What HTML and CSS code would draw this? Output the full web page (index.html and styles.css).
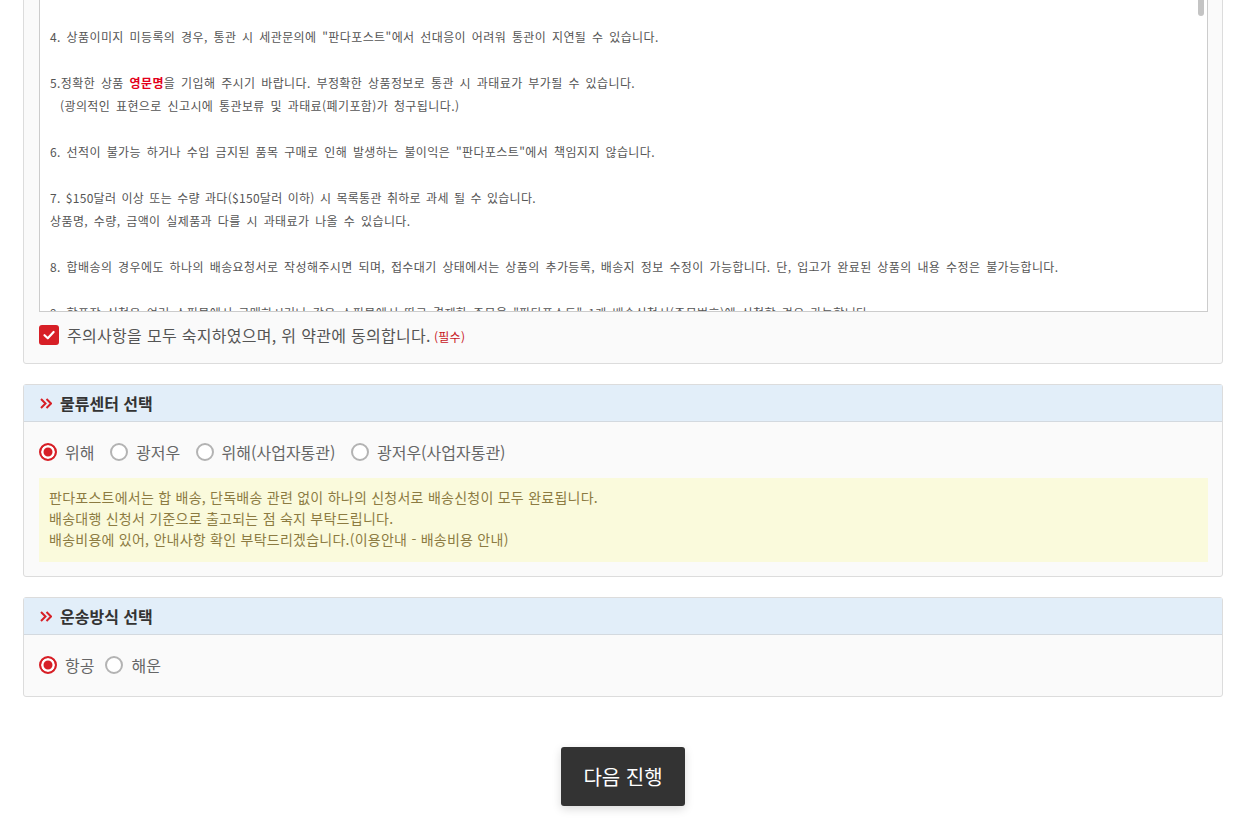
FILE: index.html
```html
<!DOCTYPE html>
<html lang="ko">
<head>
    <meta charset="UTF-8">
    <meta name="viewport" content="width=device-width, initial-scale=1.0">
    <title>배송대행 신청</title>
    <link rel="stylesheet" href="styles.css">
</head>
<body>
    <div class="order-wrap">

        <!-- 주의사항 -->
        <div class="order-box">
            <div class="box-title">
                <svg class="title-icon" width="12" height="11" viewBox="0 0 12 11"><polyline points="1,1 5.5,5.5 1,10"/><polyline points="6.5,1 11,5.5 6.5,10"/></svg>
                주의사항 및 약관동의
            </div>
            <div class="box-body terms-body">
                <div class="terms-wrap">
                    <div class="terms">
                        <p>1. 배송대행 신청서는 정확하게 작성해 주시기 바랍니다. 잘못된 정보로 인한 문제는 "판다포스트"에서 책임지지 않습니다.</p>
                        <p>2. 수취인 정보(성명, 개인통관고유부호, 연락처)는 반드시 일치해야 합니다.<br>정보가 일치하지 않을 경우 통관이 보류될 수 있습니다.</p>
                        <p>3. 트래킹번호가 없는 상품은 입고 확인이 늦어질 수 있습니다.<br>트래킹번호는 확인되는 즉시 등록해 주시기 바랍니다.</p>
                        <p>4. 상품이미지 미등록의 경우, 통관 시 세관문의에 "판다포스트"에서 선대응이 어려워 통관이 지연될 수 있습니다.</p>
                        <p>5.정확한 상품 <strong class="em-red">영문명</strong>을 기입해 주시기 바랍니다. 부정확한 상품정보로 통관 시 과태료가 부가될 수 있습니다.<br><span class="indent">(광의적인 표현으로 신고시에 통관보류 및 과태료(폐기포함)가 청구됩니다.)</span></p>
                        <p>6. 선적이 불가능 하거나 수입 금지된 품목 구매로 인해 발생하는 불이익은 "판다포스트"에서 책임지지 않습니다.</p>
                        <p><span class="num">7. $150달러 이상 또는 수량 과다($150달러 이하) 시 목록통관 취하로 과세 될 수 있습니다.</span><br>상품명, 수량, 금액이 실제품과 다를 시 과태료가 나올 수 있습니다.</p>
                        <p>8. 합배송의 경우에도 하나의 배송요청서로 작성해주시면 되며, 접수대기 상태에서는 상품의 추가등록, 배송지 정보 수정이 가능합니다. 단, 입고가 완료된 상품의 내용 수정은 불가능합니다.</p>
                        <p>9. 합포장 신청은 여러 쇼핑몰에서 구매하시거나 같은 쇼핑몰에서 따로 결제한 주문을 "판다포스트" 1개 배송신청서(주문번호)에 신청할 경우 가능합니다.</p>
                        <p>10. 검수 요청 시 추가 비용이 발생할 수 있으며, 상세 검수는 별도 신청이 필요합니다.</p>
                    </div>
                    <span class="terms-thumb"></span>
                </div>
                <label class="agree">
                    <span class="agree-check"><svg width="20" height="20" viewBox="0 0 20 20"><polyline points="5.5,10.2 8.8,13.3 14.6,7"/></svg></span>
                    주의사항을 모두 숙지하였으며, 위 약관에 동의합니다.<span class="required">(필수)</span>
                </label>
            </div>
        </div>

        <!-- 물류센터 선택 -->
        <div class="order-box">
            <div class="box-title">
                <svg class="title-icon" width="12" height="11" viewBox="0 0 12 11"><polyline points="1,1 5.5,5.5 1,10"/><polyline points="6.5,1 11,5.5 6.5,10"/></svg>
                물류센터 선택
            </div>
            <div class="box-body center-body">
                <div class="radio-row">
                    <label class="radio-item"><input type="radio" name="center" checked>위해</label>
                    <label class="radio-item"><input type="radio" name="center">광저우</label>
                    <label class="radio-item"><input type="radio" name="center">위해(사업자통관)</label>
                    <label class="radio-item"><input type="radio" name="center">광저우(사업자통관)</label>
                </div>
                <div class="notice">
                    판다포스트에서는 합 배송, 단독배송 관련 없이 하나의 신청서로 배송신청이 모두 완료됩니다.<br>
                    배송대행 신청서 기준으로 출고되는 점 숙지 부탁드립니다.<br>
                    배송비용에 있어, 안내사항 확인 부탁드리겠습니다.(이용안내 - 배송비용 안내)
                </div>
            </div>
        </div>

        <!-- 운송방식 선택 -->
        <div class="order-box">
            <div class="box-title">
                <svg class="title-icon" width="12" height="11" viewBox="0 0 12 11"><polyline points="1,1 5.5,5.5 1,10"/><polyline points="6.5,1 11,5.5 6.5,10"/></svg>
                운송방식 선택
            </div>
            <div class="box-body ship-body">
                <div class="radio-row"><label class="radio-item"><input type="radio" name="ship" checked>항공</label><label class="radio-item"><input type="radio" name="ship">해운</label></div>
            </div>
        </div>

        <div class="btn-area">
            <button class="next-btn">다음 진행</button>
        </div>
    </div>
</body>
</html>
```

FILE: styles.css
```css
:root {
    --red: #d71f26;
    --border: #dcdcdc;
    --text: #555;
}

* {
    margin: 0;
    padding: 0;
    box-sizing: border-box;
}

body {
    background: #fff;
    font-family: 'Noto Sans CJK KR', 'Noto Sans', sans-serif;
    color: var(--text);
}

/* 화면이 아래로 스크롤된 상태 */
.order-wrap {
    width: 1200px;
    margin: -228px 0 0 23px;
    padding-bottom: 40px;
}

.order-box {
    border: 1px solid var(--border);
    border-radius: 3px;
    background: #fafafa;
    margin-bottom: 20px;
}

.box-title {
    height: 37px;
    line-height: 36px;
    padding-left: 16px;
    background: #e2eef9;
    border-bottom: 1px solid #d3d9df;
    font-size: 16px;
    font-weight: 700;
    color: #333;
    display: flex;
    align-items: center;
    gap: 8px;
}

.title-icon polyline {
    fill: none;
    stroke: var(--red);
    stroke-width: 2;
}

.box-body {
    padding: 15px 14px 15px 15px;
}

.terms-body {
    padding-bottom: 18px;
}

.center-body {
    padding-bottom: 14px;
}

.ship-body {
    padding-bottom: 16px;
}

.terms-wrap {
    position: relative;
}

.terms {
    height: 487px;
    overflow: hidden;
    background: #fff;
    border: 1px solid #ccc;
    padding: 15px 10px;
    font-size: 12px;
    line-height: 23px;
    letter-spacing: 0.4px;
    word-spacing: 2px;
    color: #555;
}

.terms p {
    margin-bottom: 23px;
}

.terms .num {
    word-spacing: 1.5px;
    letter-spacing: 0.3px;
}

.terms .indent {
    padding-left: 10px;
}

.em-red {
    color: #e3001b;
}

/* 스크롤바 */
.terms-thumb {
    position: absolute;
    top: 0;
    right: 4px;
    width: 6px;
    height: 191px;
    border-radius: 3px;
    background: #c4c4c4;
}

.agree {
    display: flex;
    align-items: center;
    margin-top: 13px;
    height: 20px;
    font-size: 16px;
    letter-spacing: 0.3px;
    color: #555;
}

.agree-check {
    width: 20px;
    height: 20px;
    border-radius: 3px;
    background: var(--red);
    margin-right: 8px;
}

.agree-check svg {
    display: block;
}

.agree-check polyline {
    fill: none;
    stroke: #fff;
    stroke-width: 2.2;
    stroke-linecap: round;
    stroke-linejoin: round;
}

.required {
    font-size: 12px;
    color: #c8161d;
    margin-left: 3px;
    padding-top: 2px;
}

.radio-row {
    height: 30px;
    line-height: 30px;
    font-size: 16px;
    color: #666;
}

.radio-item {
    display: inline-flex;
    align-items: center;
    margin-right: 11px;
}

.radio-item input {
    appearance: none;
    -webkit-appearance: none;
    width: 18px;
    height: 18px;
    border: 2px solid #b3b3b3;
    border-radius: 50%;
    background: #fff;
    margin-right: 8px;
}

.radio-item input:checked {
    border-color: var(--red);
    background: var(--red);
    box-shadow: inset 0 0 0 2.5px #fff;
}

.notice {
    margin-top: 11px;
    background: #fafadc;
    padding: 9px 10px 12px;
    font-size: 14px;
    line-height: 21px;
    letter-spacing: 0.25px;
    color: #8c7b42;
}

.btn-area {
    text-align: center;
    padding-top: 30px;
}

.next-btn {
    height: 59px;
    padding: 0 22px;
    border: none;
    border-radius: 3px;
    background: #333;
    color: #fff;
    font-family: inherit;
    font-size: 20px;
    box-shadow: 0 3px 10px rgba(0, 0, 0, 0.15);
    cursor: pointer;
}
```
